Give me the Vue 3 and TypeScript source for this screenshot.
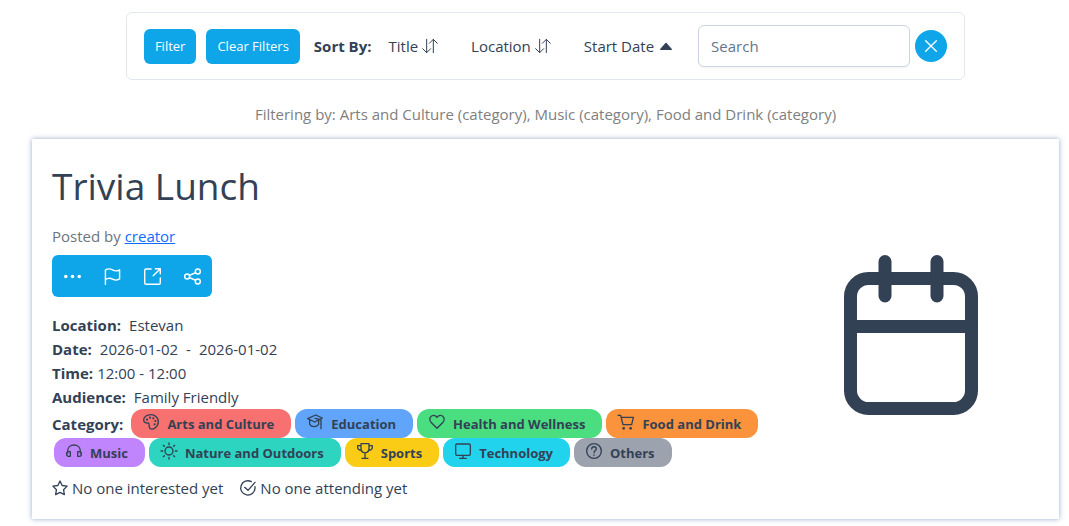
<script setup lang="ts">
import { ref } from 'vue'

interface Category {
  name: string
  tone: string
  icon: string
}

const search = ref('')

const sortFields = [
  { label: 'Title', icon: 'both' },
  { label: 'Location', icon: 'both' },
  { label: 'Start Date', icon: 'up' },
]

const actions = [
  { label: 'More', icon: '<g fill="currentColor" stroke="none"><circle cx="2.500" cy="12" r="2.500"/><circle cx="12" cy="12" r="2.500"/><circle cx="21.500" cy="12" r="2.500"/></g>' },
  { label: 'Report', icon: '<path d="M2 23V3C5.500 .5 9 1 12 2.700S18.500 4.500 22 2.500V15.500C18.500 17.500 15 17.500 12 15.800S5.500 14 2 16.500"/>' },
  { label: 'Open', icon: '<path d="M10 1.500H3Q1 1.500 1 3.500V21Q1 23 3 23H21Q23 23 23 21V14M16 1H23V8M23 1L13 11"/>' },
  { label: 'Share', icon: '<circle cx="4.500" cy="12" r="3.500"/><circle cx="19.500" cy="5" r="3.500"/><circle cx="19.500" cy="19" r="3.500"/><path d="M7.800 10.500L16.200 6.700M7.800 13.500L16.200 17.300"/>' },
]

const categories: Category[] = [
  { name: 'Arts and Culture', tone: 'red', icon: '<path d="M12 1C5 1 1 5 1 9C1 13 5 13.500 7.500 13.500C10.500 14 8.500 17 9.500 20C10.500 23.500 15 23.500 18.500 20.500C21.500 18 23 15 23 11.500C23 5.500 18 1 12 1Z"/><g fill="currentColor" stroke="none"><circle cx="6" cy="8.500" r="1.600"/><circle cx="10.500" cy="5.500" r="1.600"/><circle cx="15.500" cy="6.500" r="1.600"/><circle cx="18.500" cy="10.500" r="1.600"/><circle cx="17.500" cy="15.500" r="1.600"/></g>' },
  { name: 'Education', tone: 'blue', icon: '<path d="M1 7L13 1.500L23 6L11.500 12ZM4 9.500V15.500C7 20 14 20 17.500 15.500V9.500M12 6.500L21 8.500V22"/>' },
  { name: 'Health and Wellness', tone: 'green', icon: '<path d="M12 21.500L3 12.500C-1 8 2 2 7 2C9.500 2 11 3.500 12 5C13 3.500 14.500 2 17 2C22 2 25 8 21 12.500Z"/>' },
  { name: 'Food and Drink', tone: 'orange', icon: '<path d="M0 2H4L7.500 16H20.500L23 5H5"/><g fill="currentColor" stroke="none"><circle cx="8.500" cy="21.500" r="2"/><circle cx="19" cy="21.500" r="2"/></g>' },
  { name: 'Music', tone: 'purple', icon: '<path d="M2.500 15V12C2.500 0 21.500 0 21.500 12V15M6.500 13V20H4Q1 20 1 17V16Q1 13 4 13ZM17.500 13V20H20Q23 20 23 17V16Q23 13 20 13Z"/>' },
  { name: 'Nature and Outdoors', tone: 'teal', icon: '<circle cx="12" cy="12" r="6"/><path d="M12 0V2.500M12 21.500V24M0 12H2.500M21.500 12H24M3.500 3.500L5 5M19 19L20.500 20.500M3.500 20.500L5 19M19 5L20.500 3.500"/>' },
  { name: 'Sports', tone: 'yellow', icon: '<path d="M6 1H18V8C18 17 6 17 6 8ZM6 4H1V6Q1 11 7 11M18 4H23V6Q23 11 17 11M12 15V22M7.500 23H16.500"/>' },
  { name: 'Technology', tone: 'cyan', icon: '<rect x="1" y="1.500" width="22" height="17" rx="2"/><path d="M12 18.500V23M7 23H17"/>' },
  { name: 'Others', tone: 'gray', icon: '<circle cx="12" cy="12" r="11"/><path d="M8.500 9C8.500 4.500 15.500 4.500 15.500 9C15.500 11.500 12 11.500 12 14.500M12 17.500V18.500"/>' },
]
</script>

<template>
  <main class="page">
    <form class="toolbar" @submit.prevent>
      <div class="filters">
        <button type="button" class="btn">Filter</button>
        <button type="button" class="btn">Clear Filters</button>
      </div>
      <strong class="sort-title">Sort By:</strong>
      <div class="sorts">
        <button v-for="field in sortFields" :key="field.label" type="button" class="sort">
          {{ field.label }}
          <svg v-if="field.icon === 'both'" class="icon thin" viewBox="0 0 24 24" aria-hidden="true">
            <path d="M7 2V22M1 16L7 22L13 16M17 22V2M11 8L17 2L23 8" />
          </svg>
          <svg v-else class="icon" viewBox="0 0 24 24" aria-hidden="true">
            <path d="M4 17L12 8L20 17Z" fill="currentColor" />
          </svg>
        </button>
      </div>
      <div class="search">
        <input v-model="search" type="text" placeholder="Search" aria-label="Search" />
        <button type="button" class="clear" aria-label="Clear search" @click="search = ''">
          <svg class="close" viewBox="0 0 24 24" aria-hidden="true"><path d="M4 4L20 20M20 4L4 20" /></svg>
        </button>
      </div>
    </form>

    <p class="filtering">Filtering by: Arts and Culture (category), Music (category), Food and Drink (category)</p>

    <article class="card">
      <div class="details">
        <h1>Trivia Lunch</h1>
        <p class="author">Posted by <a href="#creator">creator</a></p>
        <div class="actions">
          <button v-for="action in actions" :key="action.label" type="button" :aria-label="action.label">
            <svg class="icon" viewBox="0 0 24 24" aria-hidden="true" v-html="action.icon" />
          </button>
        </div>
        <dl class="facts">
          <div><dt>Location:</dt><dd class="wide">Estevan</dd></div>
          <div><dt>Date:</dt><dd class="wide dates"><span>2026-01-02</span><span>-</span><span>2026-01-02</span></dd></div>
          <div><dt>Time:</dt><dd>12:00 - 12:00</dd></div>
          <div><dt>Audience:</dt><dd class="wide">Family Friendly</dd></div>
        </dl>
        <div class="categories">
          <strong>Category:</strong>
          <span v-for="category in categories" :key="category.name" class="badge" :class="category.tone">
            <svg class="icon" viewBox="0 0 24 24" aria-hidden="true" v-html="category.icon" />
            {{ category.name }}
          </span>
        </div>
        <div class="status">
          <span>
            <svg class="icon" viewBox="0 0 24 24" aria-hidden="true">
              <path d="M12 1.500L15.200 8.200L22.700 9.200L17.300 14.500L18.600 22L12 18.500L5.400 22L6.700 14.500L1.300 9.200L8.800 8.200Z" />
            </svg>
            No one interested yet
          </span>
          <span>
            <svg class="icon" viewBox="0 0 24 24" aria-hidden="true">
              <path d="M22.500 10V12A10.700 10.700 0 1 1 17 2.500M7 11L12 15.500L22.500 3.500" />
            </svg>
            No one attending yet
          </span>
        </div>
      </div>
      <div class="picture">
        <svg class="calendar" viewBox="0 0 134 160" role="img" aria-label="Event">
          <rect x="6.500" y="23.500" width="121" height="130" rx="18" />
          <path d="M41 6.500V41M93 6.500V41M7 71.500H127" />
        </svg>
      </div>
    </article>
  </main>
</template>

<style>
body {
  margin: 0;
  background: #fff;
}
</style>

<style scoped>
.page {
  padding: 12px 10px 7px 32px;
  font-family: 'Segoe UI', 'Open Sans', 'Noto Sans', sans-serif;
  font-size: 15px;
  line-height: 24px;
  color: #334155;
}
button {
  font: inherit;
  color: inherit;
  border: 0;
  padding: 0;
  background: none;
  cursor: pointer;
}
.icon {
  width: 16px;
  height: 16px;
  flex: none;
  overflow: visible;
  fill: none;
  stroke: currentColor;
  stroke-width: 2;
  stroke-linecap: round;
  stroke-linejoin: round;
}
.thin {
  stroke-width: 1.5;
}
.toolbar {
  display: flex;
  align-items: center;
  box-sizing: border-box;
  width: fit-content;
  margin: 0 auto;
  padding: 12px 17px;
  border: 1px solid #e2e8f0;
  border-radius: 6px;
}
.filters {
  display: flex;
  gap: 10px;
}
.btn {
  height: 35px;
  padding: 0 11px;
  border-radius: 6px;
  background: #0ea5e9;
  color: #fff;
  font-size: 13px;
}
.sort-title {
  margin-left: 14px;
}
.sorts {
  display: flex;
  gap: 33px;
  margin: 0 24px 0 17px;
}
.sort {
  display: flex;
  align-items: center;
  gap: 4px;
}
.search {
  display: flex;
  align-items: center;
  gap: 5px;
}
.search input {
  box-sizing: border-box;
  width: 212px;
  height: 42px;
  padding: 0 12px;
  border: 1px solid #cbd5e1;
  border-radius: 6px;
  font: inherit;
  color: inherit;
  box-shadow: 0 1px 2px rgba(18, 18, 23, 0.05);
}
.search input::placeholder {
  color: #64748b;
}
.clear {
  display: grid;
  place-items: center;
  width: 32px;
  height: 32px;
  border-radius: 50%;
  background: #0ea5e9;
  color: #fff;
}
.close {
  width: 16px;
  height: 16px;
  stroke: currentColor;
  stroke-width: 2;
  stroke-linecap: round;
}
.filtering {
  margin: 22px 0 13px;
  text-align: center;
  color: #808080;
}
.card {
  display: grid;
  grid-template-columns: minmax(0, 1fr) 256px;
  align-items: center;
  padding: 20px 20px 19px;
  background: #fff;
  box-shadow: 0 0 5px rgba(51, 85, 150, 0.5);
}
h1 {
  margin: 3px 0 14px;
  font-size: 37px;
  font-weight: 400;
  line-height: 48px;
}
.author {
  margin: 0 0 7px;
  color: #6c757d;
}
.author a {
  color: #0d6efd;
}
.actions {
  display: flex;
  width: fit-content;
  border-radius: 6px;
  background: #0ea5e9;
  color: #fff;
}
.actions button {
  display: grid;
  place-items: center;
  width: 40px;
  height: 42px;
}
.actions .icon {
  width: 17px;
  height: 17px;
}
.facts {
  margin: 16px 0 0;
}
.facts div {
  display: flex;
}
dt,
strong {
  font-weight: 700;
}
dd {
  margin: 0 0 0 4px;
}
dd.wide {
  margin-left: 8px;
}
.dates {
  display: flex;
  gap: 8px;
}
.categories {
  display: flex;
  flex-wrap: wrap;
  align-items: center;
}
.categories strong {
  margin-right: 6px;
}
.badge {
  display: flex;
  align-items: center;
  gap: 8px;
  height: 29px;
  margin: 0 2px;
  padding: 0 17px 0 12px;
  box-sizing: border-box;
  border-radius: 12px;
  font-size: 13px;
  font-weight: 700;
}
.badge .icon {
  margin-bottom: 4px;
}
.red { background: #f87171; }
.blue { background: #60a5fa; }
.green { background: #4ade80; }
.orange { background: #fb923c; }
.purple { background: #c084fc; }
.teal { background: #2dd4bf; }
.yellow { background: #facc15; }
.cyan { background: #22d3ee; }
.gray { background: #9ca3af; }
.status {
  display: flex;
  gap: 17px;
  margin-top: 9px;
}
.status span {
  display: flex;
  align-items: center;
  gap: 4px;
}
.picture {
  display: flex;
  justify-content: center;
  padding-top: 10px;
}
.calendar {
  width: 134px;
  height: 160px;
  fill: none;
  stroke: currentColor;
  stroke-width: 13;
  stroke-linecap: round;
}
</style>
